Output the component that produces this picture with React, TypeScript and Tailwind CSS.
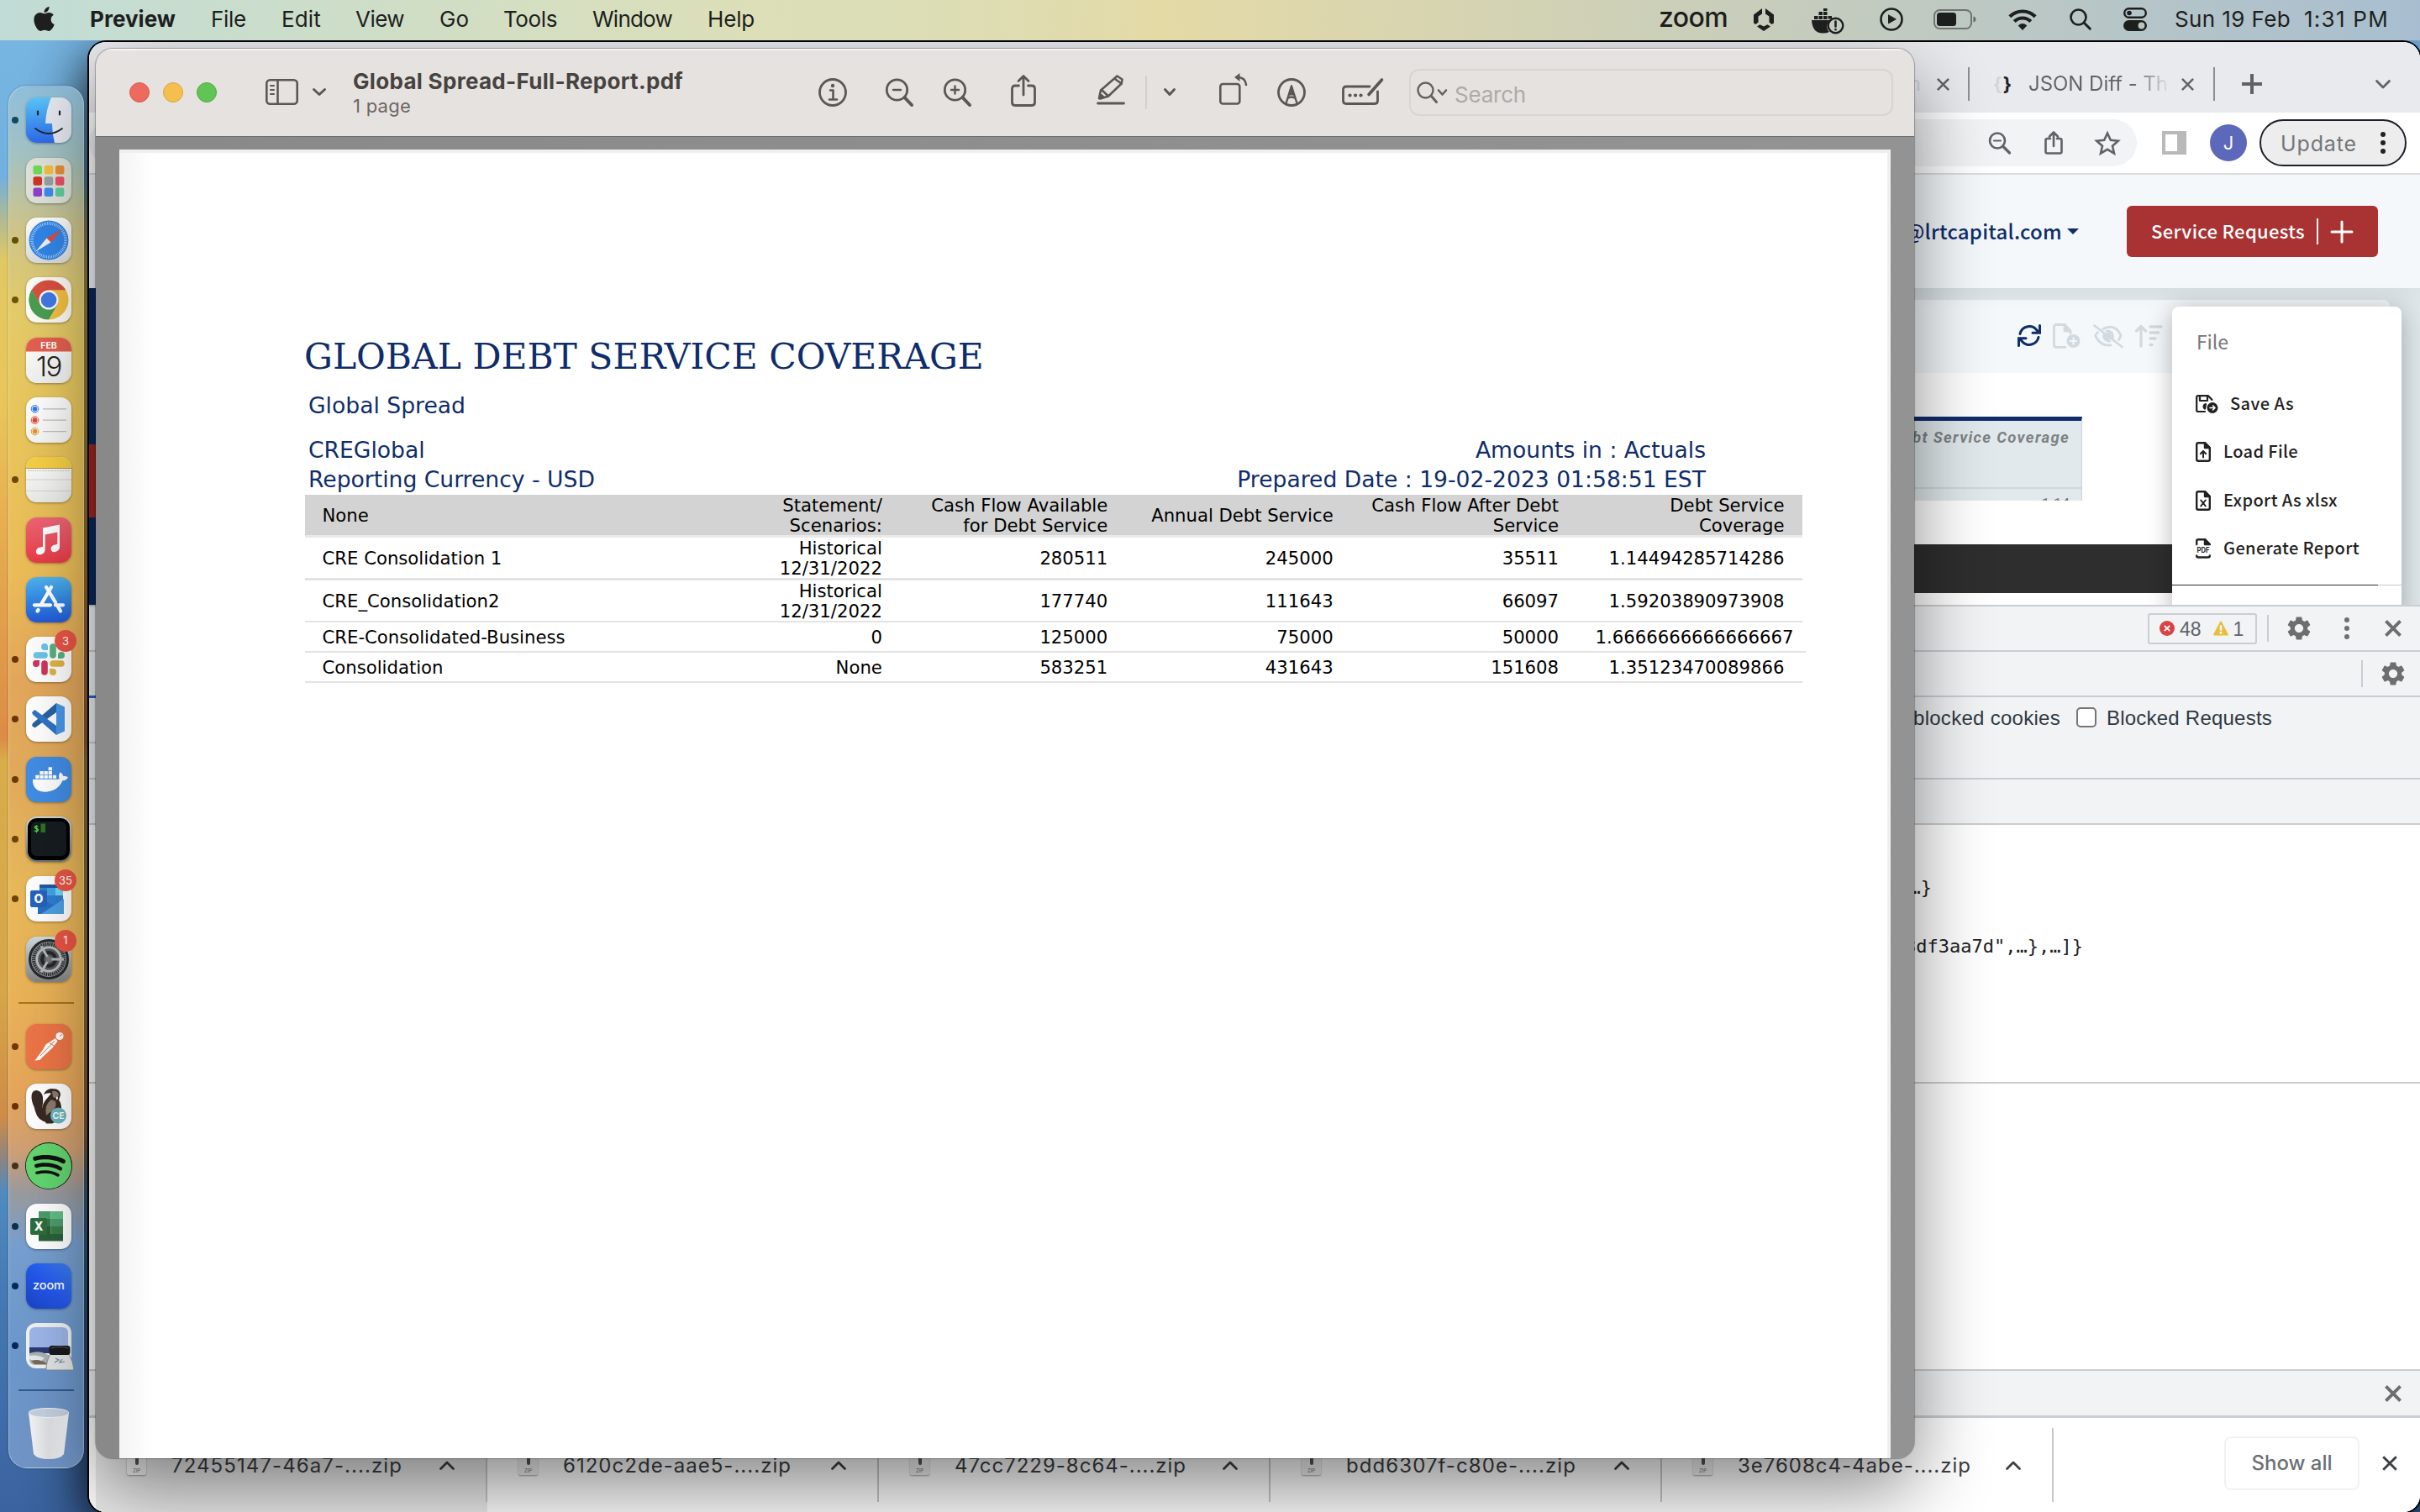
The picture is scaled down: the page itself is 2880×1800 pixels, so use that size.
import React, { useLayoutEffect, useRef, useState } from "react";
import { FaApple, FaDocker, FaSpotify } from "react-icons/fa";
import { MdSettings } from "react-icons/md";

/* Text whose tracking is adjusted at runtime so that it spans a given width. */
function Fit({ w, className = "", children }: { w: number; className?: string; children: string }) {
  const ref = useRef<HTMLSpanElement>(null);
  const [ls, setLs] = useState(0);
  useLayoutEffect(() => {
    if (ref.current) setLs((w - ref.current.getBoundingClientRect().width) / children.length);
  }, [w, children]);
  return (
    <span ref={ref} className={`inline-block shrink-0 whitespace-pre ${className}`} style={{ letterSpacing: `${ls}px` }}>
      {children}
    </span>
  );
}

type IconProps = { className?: string; box: string; sw?: number; children: React.ReactNode };
function Icon({ className = "", box, sw = 3, children }: IconProps) {
  return (
    <svg viewBox={box} className={`shrink-0 overflow-visible ${className}`} fill="none" stroke="currentColor" strokeWidth={sw} strokeLinecap="round" strokeLinejoin="round">
      {children}
    </svg>
  );
}

const Close = ({ className = "", sw = 3 }: { className?: string; sw?: number }) => (
  <Icon box="0 0 18 18" sw={sw} className={className}>
    <path d="M2 2l14 14M16 2L2 16" strokeLinecap="butt" />
  </Icon>
);

/* ---------------- Menu bar ---------------- */

const MENUS: [string, string, number][] = [
  ["File", "ml-[42px]", 42],
  ["Edit", "ml-[42px]", 47],
  ["View", "ml-[41px]", 58],
  ["Go", "ml-[42px]", 35],
  ["Tools", "ml-[41px]", 64],
  ["Window", "ml-[42px]", 95],
  ["Help", "ml-[42px]", 56],
];

function MenuBar() {
  return (
    <div className="absolute inset-x-0 top-0 z-40 flex h-12 items-center bg-linear-to-r from-[#c1dcd6] via-[#e4daa6] via-48% to-[#a8bed0] pb-[2px] text-[26px] leading-none text-[#1d1f1e]">
      <div className="absolute inset-0 bg-linear-to-r from-[#c1dcd6] via-[#dcdfb8] via-31% to-transparent to-48%" />
      <div className="relative flex w-full items-center">
        <FaApple className="ml-[37px] h-[33px] w-[31px] -translate-y-[1px]" />
        <Fit w={102} className="ml-[39px] font-bold">Preview</Fit>
        {MENUS.map(([t, m, w]) => (
          <div key={t} className={m}>
            <Fit w={w}>{t}</Fit>
          </div>
        ))}
        <div className="grow" />
        <Fit w={82} className="-translate-y-[2px] text-[32px] font-medium">zoom</Fit>
        <Icon box="0 0 24 27" sw={0} className="ml-[31px] h-[27px] w-6">
          <g fill="currentColor">
            <path d="M10 0v6.500L5.500 9.500v7L2.500 19 0 17.500V7.500z" />
            <path d="M14 0v6.500l4.500 3v7l3 2.500 2.500-1.500v-10z" />
            <path d="M4 21.500l3.500-2.300L12 21.500l4.500-2.300 3.500 2.300L12 27z" />
          </g>
        </Icon>
        <Icon box="0 0 39 31" sw={0} className="ml-[45px] h-[31px] w-[39px] translate-y-[2px]">
          <g fill="currentColor">
            <path d="M0 14h22a9.500 9.500 0 0 0-1 14q-3 1.500-8 1.500Q1 29.500 0 14zM3 9h4.500v4H3zM8.500 9H13v4H8.500zM14 9h4.500v4H14zM8.500 4H13v4H8.500zM14 4h4.500v4H14zM19.500 9H24v3.500h-4.500zM14 0h4.500v3H14z" />
          </g>
          <circle cx="28.500" cy="20.500" r="8.800" stroke="currentColor" strokeWidth="2.400" />
          <path d="M28.500 15.500v6M28.500 25v.3" stroke="currentColor" strokeWidth="2.600" />
        </Icon>
        <Icon box="0 0 28 28" sw={2.6} className="ml-[42px] h-[28px] w-[28px]">
          <circle cx="14" cy="14" r="12.500" />
          <path d="M10.500 9.200v9.600l8.500-4.800z" fill="currentColor" strokeWidth="1" />
        </Icon>
        <Icon box="0 0 51 24" sw={2} className="ml-[36px] h-6 w-[51px]">
          <rect x="1" y="1" width="44" height="22" rx="6.500" opacity=".5" />
          <rect x="4" y="4" width="23" height="16" rx="3.500" fill="currentColor" stroke="none" />
          <path d="M47.500 8.500q3 1 3 3.500t-3 3.500z" fill="currentColor" stroke="none" opacity=".55" />
        </Icon>
        <Icon box="0 0 34 25" sw={4.2} className="ml-[38px] h-[25px] w-[34px]">
          <path d="M1.800 8.800a21.500 21.500 0 0 1 30.400 0M7.200 14.600a13.800 13.800 0 0 1 19.600 0" strokeLinecap="butt" />
          <path d="M17 25l-5.300-5.600q5.300-4.600 10.600 0z" fill="currentColor" stroke="none" />
        </Icon>
        <Icon box="0 0 26 26" sw={2.6} className="ml-[39px] h-[26px] w-[26px]">
          <circle cx="10.500" cy="10.500" r="9" />
          <path d="M17.300 17.300l7 7" strokeWidth="3" />
        </Icon>
        <Icon box="0 0 28 28" sw={2.4} className="ml-[38px] h-7 w-7">
          <rect x="1.200" y="1.200" width="25.600" height="10.600" rx="5.300" />
          <circle cx="7" cy="6.500" r="2.800" fill="currentColor" stroke="none" />
          <rect x="0" y="15" width="28" height="13" rx="6.500" fill="currentColor" stroke="none" />
          <circle cx="21.500" cy="21.500" r="3.900" fill="#b9c3c0" stroke="none" />
        </Icon>
        <Fit w={138} className="ml-[33px]">Sun 19 Feb</Fit>
        <Fit w={101} className="mr-[37px] ml-[16px]">1:31 PM</Fit>
      </div>
    </div>
  );
}

/* ---------------- Dock ---------------- */

function Tile({ className = "", children }: { className?: string; children?: React.ReactNode }) {
  return (
    <svg viewBox="0 0 54 54" className={`h-[54px] w-[54px] overflow-hidden rounded-[13px] shadow-[0_1px_3px_rgba(0,0,0,0.35)] ${className}`}>
      {children}
    </svg>
  );
}

const LP = ["#6fdc5a", "#f4c13e", "#e98f35", "#cf3427", "#9aa1a6", "#ec5064", "#9440c8", "#3b8df2", "#5fcf9b"];

const finder = (
  <Tile className="bg-linear-to-b from-[#5cc6f8] to-[#3069ea]">
    <path d="M30 0Q24 14 23 31h8q0 12 3 23h20V0z" fill="#e6e9f0" />
    <path d="M14 16.500v4M40 16.500v4" stroke="#1b2530" strokeWidth="2.200" strokeLinecap="round" />
    <path d="M11 37q16 12 32 0" fill="none" stroke="#1b2530" strokeWidth="1.800" strokeLinecap="round" />
  </Tile>
);
const launchpad = (
  <Tile className="bg-[#dfe3da]">
    {LP.map((c, i) => (
      <rect key={c} x={8.500 + (i % 3) * 13.200} y={9 + Math.floor(i / 3) * 13.200} width="10.500" height="10.500" rx="2.500" fill={c} />
    ))}
  </Tile>
);
const safari = (
  <Tile className="bg-linear-to-b from-white to-[#dcdcdc]">
    <circle cx="27" cy="27" r="23.500" fill="#3186e8" />
    <circle cx="27" cy="27" r="20" fill="none" stroke="#cfe4fb" strokeWidth="3.500" strokeDasharray=".7 1.390" />
    <path d="M43 14L29.500 29.500l-5-5z" fill="#e8483c" />
    <path d="M11.500 40.500l13-16 5 5z" fill="#f2f2f2" />
  </Tile>
);
const chrome = (
  <Tile className="bg-[#fdfcf8]">
    <path d="M27 27L6.650 15.250A23.500 23.500 0 0 1 47.350 15.250z" fill="#d9503f" />
    <path d="M27 15.250h20.350A23.500 23.500 0 0 1 27 50.500L37.200 32.900z" fill="#f4c043" />
    <path d="M6.650 15.250A23.500 23.500 0 0 0 27 50.500L37.200 32.900 27 27 16.800 32.900z" fill="#4a9f50" />
    <path d="M27 15.250H6.650L16.800 32.900z" fill="#d9503f" />
    <path d="M6.650 15.250L16.800 32.900 27 38.800l-3 11.500A23.500 23.500 0 0 1 6.650 15.250z" fill="#4a9f50" />
    <circle cx="27" cy="27" r="11.500" fill="#fff" />
    <circle cx="27" cy="27" r="9.300" fill="#417be6" />
  </Tile>
);
const calendar = (
  <Tile className="bg-linear-to-b from-white to-[#f1f1ef]">
    <path d="M0 0h54v16.500H0z" fill="#e5604f" />
    <text x="27" y="12.600" textAnchor="middle" fontSize="10.500" fontWeight="700" fill="#fff" fontFamily="Inter">FEB</text>
    <text x="27" y="46" textAnchor="middle" fontSize="33" fontWeight="300" fill="#222" fontFamily="Inter" letterSpacing="-1.500">19</text>
  </Tile>
);
const reminders = (
  <Tile className="bg-linear-to-b from-white to-[#f6f6f4]">
    {["#2f79ef", "#e0483b", "#e5952f"].map((c, i) => (
      <g key={c}>
        <circle cx="10.500" cy={13.800 + i * 13.400} r="4.300" fill="none" stroke={c} strokeWidth="1" />
        <circle cx="10.500" cy={13.800 + i * 13.400} r="2.900" fill={c} />
        <path d={`M20 ${13.800 + i * 13.400}h28`} stroke="#bdbdbd" strokeWidth="1.200" />
      </g>
    ))}
  </Tile>
);
const notes = (
  <Tile className="bg-linear-to-b from-white to-[#ebebe7]">
    <path d="M0 0h54v13H0z" fill="#f7cf45" />
    <path d="M0 13.500h54" stroke="#a89552" strokeWidth="1" />
    <path d="M2 16.500h50" stroke="#aaa" strokeWidth="1" strokeDasharray="1 1.200" />
    <path d="M0 27h54M0 40.500h54" stroke="#d4d4d1" strokeWidth="1" />
  </Tile>
);
const music = (
  <Tile className="bg-linear-to-b from-[#ee6576] to-[#e93a48]">
    <path d="M20 12.500l20-4v26.500q0 4.500-5 6-5 .8-5.500-3.500.3-4.200 5-5l2.800-.8V17.500L22.700 20.500V38q0 4.800-5.200 6.200-5.200.8-5.700-3.500.3-4.400 5.200-5.200l3-.8z" fill="#fff" />
  </Tile>
);
const appstore = (
  <Tile className="bg-linear-to-b from-[#4fb4ee] to-[#2359d8]">
    <g stroke="#fff" strokeWidth="4.300" strokeLinecap="round">
      <path d="M30 12L18.500 31.500M14.500 39l-1 1.500M24 12l11 18M37 33.500l4 7M10 33.300h19M35 33.300h9" />
    </g>
  </Tile>
);
const slack = (
  <Tile className="bg-white">
    <g strokeLinecap="round" strokeWidth="7.600">
      <path d="M12.500 22H22" stroke="#6ac4ea" />
      <path d="M32 12v10" stroke="#58b181" />
      <path d="M22 32v10" stroke="#cf3560" />
      <path d="M32 32h10" stroke="#e2b347" />
    </g>
    <path d="M26 16V12a4 4 0 1 0-4 4z" fill="#6ac4ea" />
    <path d="M38 26h4a4 4 0 1 0-4-4z" fill="#58b181" />
    <path d="M28 38v4a4 4 0 1 0 4-4z" fill="#e2b347" />
    <path d="M16 28h-4a4 4 0 1 0 4 4z" fill="#cf3560" />
  </Tile>
);
const vscode = (
  <Tile className="bg-white">
    <path d="M36 8L8 32l-1 3 3.500 2.500L36 19z" fill="#2763a5" />
    <path d="M36 46L8 21.500 7 19l3.500-3L36 35z" fill="#3075c4" />
    <path d="M36 8l10 4.500v29L36 46z" fill="#4997ea" />
  </Tile>
);
const docker = (
  <div className="flex h-[54px] w-[54px] items-center justify-center rounded-[13px] bg-[#428de6] pl-[4px] shadow-[0_1px_3px_rgba(0,0,0,0.35)]">
    <FaDocker className="h-[42px] w-[42px] text-white" />
  </div>
);
const terminal = (
  <Tile className="bg-linear-to-b from-[#cfd8dd] to-[#6f7274]">
    <rect x="2" y="2" width="50" height="50" rx="11" fill="#000" />
    <rect x="6" y="6" width="42" height="41" rx="6" fill="#161c20" />
    <text x="9" y="18" fontSize="11" fontWeight="700" fill="#57dc47" fontFamily="DejaVu Sans Mono">$</text>
    <path d="M17.500 8.500h5.500v10.500h-5.500z" fill="#2e7326" />
  </Tile>
);
const outlook = (
  <Tile className="bg-white">
    <path d="M16 10h28v8H16z" fill="#2059a5" />
    <path d="M16 14h28v14H16z" fill="#2f82d3" />
    <path d="M25 14h10v9H25z" fill="#42a5e8" />
    <path d="M35 14h9v9h-9z" fill="#6ed5f6" />
    <path d="M14 23h30v22H14z" fill="#2f7fd2" />
    <path d="M14 25l31 16v4H14z" fill="#2a6fc6" />
    <path d="M45 27v18H18z" fill="#4da0e4" />
    <rect x="5" y="17" width="20" height="20" rx="2" fill="#2463bf" />
    <text x="15" y="32" textAnchor="middle" fontSize="14" fontWeight="800" fill="#fff" fontFamily="Inter">O</text>
  </Tile>
);
const settings = (
  <Tile className="bg-linear-to-b from-[#cfdbe0] to-[#848484]">
    <circle cx="27" cy="27" r="22.500" fill="#8d9294" stroke="#26282a" strokeWidth="3" />
    <circle cx="27" cy="27" r="18" fill="none" stroke="#2b2d2f" strokeWidth="4" strokeDasharray="1.500 1" />
    <circle cx="27" cy="27" r="14" fill="#55585a" stroke="#b9bdbf" strokeWidth="2.500" />
    <circle cx="27" cy="27" r="8" fill="none" stroke="#25272a" strokeWidth="4" />
    <path d="M27 27h18M27 27l-9-15.600M27 27l-9 15.600" stroke="#b3b7b9" strokeWidth="3" />
    <circle cx="27" cy="27" r="3.500" fill="#77797b" />
  </Tile>
);
const postman = (
  <Tile className="bg-[#ee7547]">
    <circle cx="40" cy="14.500" r="4.600" fill="#fff" />
    <path d="M35 17l-11 7-5 8-8.500 11.500 6-.5 3-3.500L31 29l6.500-8.500z" fill="#fff" />
    <path d="M34 20L17 38M28 22.500l6 4M40 14.500l3-2" stroke="#ee7547" strokeWidth="1" />
  </Tile>
);
const dbeaver = (
  <Tile className="bg-white">
    <path d="M6.500 17q-.5-9 6-9 6 .5 7.500 8 .5 8-1 13 .5 9 7 17-12-1-15-13-1-5-3-9-1-3-1.500-7z" fill="#382923" />
    <path d="M21 13q2-6 9-7l6 .5q5 2 5 7l-2 6q3 4 3 10l-2 14-9 4h-7q-6-8-5-18 1-7 7-13l4-5q-5-1-9 1.500z" fill="#382923" />
    <path d="M24 38q-3-12 6-19l5 2q2 6-3 11-5 3-8 6z" fill="#8d7a6e" />
    <path d="M31 9q6-1 8 4l-2 5-5-2z" fill="#8d7a6e" />
    <path d="M36 15.500l2 .5-.5 3h-1.500z" fill="#fff" />
    <circle cx="38.500" cy="38" r="9.500" fill="#6bb6bd" />
    <text x="38.500" y="42" textAnchor="middle" fontSize="10.500" fontWeight="600" fill="#fff" fontFamily="Inter">CE</text>
  </Tile>
);
const spotify = (
  <div className="flex h-14 w-14 shrink-0 items-center justify-center rounded-full bg-[#111]">
    <FaSpotify className="h-14 w-14 text-[#63d670]" />
  </div>
);
const excel = (
  <Tile className="bg-white">
    <path d="M15 9h14.500v9H15z" fill="#4a9e6c" />
    <path d="M29.500 9H44v9H29.500z" fill="#62be84" />
    <path d="M15 18h14.500v9H15z" fill="#347a49" />
    <path d="M29.500 18H44v9H29.500z" fill="#4a9e6c" />
    <path d="M15 27h14.500v9H15z" fill="#2a5f39" />
    <path d="M29.500 27H44v9H29.500z" fill="#397e4a" />
    <path d="M15 36h29v8.500H15z" fill="#2b613b" />
    <rect x="5" y="17" width="20" height="20" rx="2" fill="#2c6e3d" />
    <text x="15" y="32" textAnchor="middle" fontSize="14" fontWeight="800" fill="#fff" fontFamily="Inter">X</text>
  </Tile>
);
const zoomApp = (
  <Tile className="bg-linear-to-tr from-[#1a42c0] via-[#2459ee] to-[#3f7cf0]">
    <text x="8" y="31" fontSize="14.500" fontWeight="500" fill="#fff" fontFamily="Inter" textLength="38">zoom</text>
  </Tile>
);
const previewApp = (
  <svg viewBox="0 0 54 54" className="h-[54px] w-[54px] overflow-visible">
    <rect width="54" height="54" rx="12" fill="#f1f1f1" />
    <path d="M4 12q0-7 7-7h32q7 0 7 7v17H4z" fill="#9db6ea" />
    <path d="M4 29h46v7H4z" fill="#2b3a72" />
    <path d="M4 36q12-4 20 1t26-1v12q-2 2-6 2H11q-7 0-7-7z" fill="#a9b2b5" />
    <path d="M4 39q10-2 18 3l-4 3q-8 2-14-2z" fill="#e4e9ec" />
    <path d="M6 45q10-3 20 4H10z" fill="#7a6a58" />
    <path d="M29 37h22q5 8 6 19H24q0-11 5-19z" fill="#e2e5e6" stroke="#8b8e90" strokeWidth="1" />
    <path d="M35 42l4 2-5 3M43 43l-3 4 6-1" stroke="#70859a" strokeWidth="1.200" fill="none" />
    <rect x="27.500" y="27" width="25" height="11" rx="3" fill="#17191b" />
    <path d="M30 30q10-3 20 0" stroke="#5a5c5e" strokeWidth="1.200" fill="none" />
  </svg>
);

const Badge = ({ children }: { children: string }) => (
  <span className="absolute -top-[8px] -right-[6px] flex h-[26px] w-[26px] items-center justify-center rounded-full bg-[#ec5545] text-[13px] leading-none text-white">{children}</span>
);

type DockItem = { id: string; icon: React.ReactNode; dot?: string; badge?: string };
const DOCK_A: DockItem[] = [
  { id: "finder", icon: finder, dot: "bg-[#124a63]" },
  { id: "launchpad", icon: launchpad },
  { id: "safari", icon: safari, dot: "bg-[#655200]" },
  { id: "chrome", icon: chrome, dot: "bg-[#6f5500]" },
  { id: "calendar", icon: calendar },
  { id: "reminders", icon: reminders },
  { id: "notes", icon: notes, dot: "bg-[#724800]" },
  { id: "music", icon: music },
  { id: "appstore", icon: appstore },
  { id: "slack", icon: slack, dot: "bg-[#6b3600]", badge: "3" },
  { id: "vscode", icon: vscode, dot: "bg-[#6b3600]" },
  { id: "docker", icon: docker, dot: "bg-[#6b3d00]" },
  { id: "terminal", icon: terminal, dot: "bg-[#704400]" },
  { id: "outlook", icon: outlook, dot: "bg-[#704400]", badge: "35" },
  { id: "settings", icon: settings, badge: "1" },
];
const DOCK_B: DockItem[] = [
  { id: "postman", icon: postman, dot: "bg-[#6f3b00]" },
  { id: "dbeaver", icon: dbeaver, dot: "bg-[#6b3000]" },
  { id: "spotify", icon: spotify, dot: "bg-[#47301e]" },
  { id: "excel", icon: excel, dot: "bg-[#10304f]" },
  { id: "zoom", icon: zoomApp, dot: "bg-[#052a5e]" },
  { id: "preview", icon: previewApp, dot: "bg-[#05265a]" },
];

function DockList({ items }: { items: DockItem[] }) {
  return (
    <>
      {items.map((d) => (
        <div key={d.id} className="flex h-[71.3px] shrink-0 items-center">
          <span className={`ml-[3px] h-2 w-2 rounded-full ${d.dot ?? ""}`} />
          <div className="relative ml-[9px] flex w-[54px] justify-center">
            {d.icon}
            {d.badge && <Badge>{d.badge}</Badge>}
          </div>
        </div>
      ))}
    </>
  );
}

function Dock() {
  return (
    <div className="absolute top-[102px] left-[10px] flex h-[1646px] w-[90px] flex-col rounded-[22px] border-[1.5px] border-white/30 bg-[linear-gradient(to_bottom,#90bfdb_0%,#a4c3c4_5%,#cdc58c_10%,#e4cb6a_16%,#e9c65c_24%,#ebbd58_35%,#e3a75c_43%,#e1ab5b_50%,#e8b85a_58%,#eab257_66%,#e5a55b_73%,#cfa073_77%,#9c9b9d_80%,#769fcf_84%,#6c97cb_92%,#7194c6_100%)] pt-[4.800px] shadow-[0_0_3px_rgba(0,0,0,0.25)]">
      <DockList items={DOCK_A} />
      <div className="mx-[11px] mt-[16px] h-[2px] shrink-0 bg-[#a87520]" />
      <div className="mt-[15px] flex flex-col">
        <DockList items={DOCK_B} />
      </div>
      <div className="mx-[11px] mt-[16px] h-[2px] shrink-0 bg-[#325a92]" />
      <svg viewBox="0 0 48 61" className="mt-[20px] ml-[23px] h-[61px] w-12">
        <defs>
          <linearGradient id="bin" x1="0" x2="1">
            <stop offset="0" stopColor="#f4f5f6" />
            <stop offset=".5" stopColor="#dfe1e4" />
            <stop offset="1" stopColor="#f4f5f6" />
          </linearGradient>
        </defs>
        <path d="M0 6l6 49q4 6 18 6t18-6l6-49z" fill="url(#bin)" />
        <ellipse cx="24" cy="6" rx="24" ry="5.500" fill="#c5d0e0" stroke="#f2f4f6" strokeWidth="1" />
      </svg>
    </div>
  );
}

/* ---------------- Browser window ---------------- */

const FileShape = ({ children }: { children: React.ReactNode }) => (
  <Icon box="0 0 18 24" sw={2.4} className="h-6 w-[18px]">
    {children}
  </Icon>
);
const fileBody = (
  <>
    <path d="M11 1.200H3.200q-2 0-2 2v17.600q0 2 2 2h11.600q2 0 2-2V7z" />
    <path d="M11 1.200V7h5.800z" fill="currentColor" />
  </>
);

const FILE_MENU: { t: string; w: number; gap: string; icon: React.ReactNode }[] = [
  {
    t: "Save As",
    w: 76,
    gap: "ml-[14px]",
    icon: (
      <Icon box="0 0 27 22" sw={2.2} className="h-[22px] w-[27px]">
        <path d="M11 20H3q-1.800 0-1.800-1.800V3Q1.200 1.200 3 1.200h12L19.500 6" />
        <path d="M5 1.500v5.500h9V1.500" />
        <path d="M12 11a3 3 0 0 0-1 5.500z" fill="currentColor" />
        <circle cx="20" cy="15.500" r="6.500" fill="currentColor" stroke="none" />
        <path d="M17 15.500h5.500M20.500 13l2.500 2.500-2.500 2.500" stroke="#fff" strokeWidth="1.600" />
      </Icon>
    ),
  },
  { t: "Load File", w: 89, gap: "ml-[15px]", icon: <FileShape>{fileBody}<path d="M9 18.500v-7M5.800 14.200L9 11l3.200 3.200" strokeWidth="2" /></FileShape> },
  { t: "Export As xlsx", w: 136, gap: "ml-[15px]", icon: <FileShape>{fileBody}<path d="M6.200 11.500l5.600 7M11.800 11.500l-5.600 7" strokeWidth="2" /></FileShape> },
  {
    t: "Generate Report",
    w: 162,
    gap: "ml-[15px]",
    icon: (
      <FileShape>
        <path d="M1.200 7V3.200q0-2 2-2H11L16.800 7M1.200 20.500q0 2 2 2h11.600q2 0 2-2" />
        <path d="M11 1.200V7h5.800z" fill="currentColor" />
        <text x="9" y="17" textAnchor="middle" fontSize="8.500" fontWeight="700" fill="currentColor" stroke="none" fontFamily="Inter" textLength="15" lengthAdjust="spacingAndGlyphs">PDF</text>
      </FileShape>
    ),
  },
];

const DOWNLOADS: [string, number][] = [
  ["72455147-46a7-....zip", 275],
  ["6120c2de-aae5-....zip", 272],
  ["47cc7229-8c64-....zip", 276],
  ["bdd6307f-c80e-....zip", 274],
  ["3e7608c4-4abe-....zip", 278],
];

function TabStrip() {
  return (
    <div className="flex h-[84px] shrink-0 items-center justify-end bg-[#e8eaed] pt-[16px] pr-[35px] text-[24px] leading-none text-[#5f6368]">
      <span className="text-[#cfd1d4]">on</span>
      <Close className="ml-[18px] h-[17px] w-[17px]" sw={2.6} />
      <span className="ml-[21px] h-10 w-[2px] bg-[#8b8e93]" />
      <div className="ml-[28px] flex w-[22px] justify-between text-[22px] leading-none font-bold">
        <span className="text-[#d3d5d8]">{"{"}</span>
        <span className="text-[#202124]">{"}"}</span>
      </div>
      <Fit w={166} className="ml-[20px] translate-y-[2px] bg-linear-to-r from-[#5f6368] from-75% to-[#e0e2e5] bg-clip-text pb-1 text-transparent">JSON Diff - Th</Fit>
      <Close className="ml-[15px] h-[17px] w-[17px]" sw={2.6} />
      <span className="ml-[22px] h-10 w-[2px] bg-[#8b8e93]" />
      <Icon box="0 0 24 24" sw={4} className="ml-[32px] h-6 w-6">
        <path d="M12 0v24M0 12h24" strokeLinecap="butt" />
      </Icon>
      <Icon box="0 0 18 11" sw={2.8} className="ml-[135px] h-[11px] w-[18px]">
        <path d="M1.500 1.500L9 9l7.500-7.500" />
      </Icon>
    </div>
  );
}

function AddressBar() {
  return (
    <div className="flex h-[74px] shrink-0 items-center border-b-2 border-[#dadcdd] bg-white pr-[16px] text-[#5f6368]">
      <div className="flex h-14 grow items-center justify-end rounded-full bg-[#f1f3f4] pr-[20px]">
        <Icon box="0 0 27 26" sw={2.6} className="h-[26px] w-[27px]">
          <circle cx="11" cy="10.500" r="9" />
          <path d="M17.500 17l8 8" strokeWidth="3.200" />
          <path d="M7 10.500h8" strokeWidth="2.200" />
        </Icon>
        <Icon box="0 0 22 28" sw={2.6} className="ml-[40px] h-7 w-[22px]">
          <path d="M7 9H3.500Q1.500 9 1.500 11v13.500q0 2 2 2h15q2 0 2-2V11q0-2-2-2H15M11 18V2M6 6.500l5-5 5 5" />
        </Icon>
        <Icon box="0 0 30 28" sw={2.6} className="ml-[38px] h-7 w-[30px]">
          <path d="M15 2.500l3.800 8.300 9 .9-6.800 6 2 8.800-8-4.700-8 4.700 2-8.800-6.800-6 9-.9z" strokeLinejoin="miter" />
        </Icon>
      </div>
      <div className="ml-[30px] h-7 w-[29px] border-4 border-r-[11px] border-[#b9b9b9] bg-white" />
      <div className="ml-[28px] flex h-11 w-11 items-center justify-center rounded-full bg-[#5c68ba] text-[22px] leading-none text-white">J</div>
      <div className="ml-[15px] flex h-14 w-[175px] items-center rounded-full border-2 border-[#1f1f29] bg-[#ededed] pl-[23px] text-[25px] leading-none text-[#72767b]">
        <Fit w={91} className="translate-y-px">Update</Fit>
        <div className="ml-[28px] flex flex-col gap-[4px]">
          <span className="h-[6px] w-[6px] rounded-full bg-[#202124]" />
          <span className="h-[6px] w-[6px] rounded-full bg-[#202124]" />
          <span className="h-[6px] w-[6px] rounded-full bg-[#202124]" />
        </div>
      </div>
    </div>
  );
}

function WebApp() {
  return (
    <div className="relative flex h-[512px] shrink-0 flex-col overflow-hidden bg-[#dfe7eb] font-['Noto_Sans_CJK_SC','Noto_Sans',sans-serif]">
      <div className="z-10 flex h-[135px] shrink-0 items-center justify-end bg-[#f4f8fb] pr-[50px] shadow-[0_2px_30px_rgba(0,0,0,0.06)]">
        <Fit w={187} className="-translate-y-px text-[24px] leading-none font-medium text-[#0f2d6b]">@lrtcapital.com</Fit>
        <Icon box="0 0 14 7" sw={0} className="ml-[6px] h-[7px] w-[14px]">
          <path d="M0 0h14L7 7z" fill="#0f2d6b" />
        </Icon>
        <div className="ml-[57px] flex h-[61px] w-[299px] items-center rounded-[6px] bg-[#a93232] pl-[29px] text-white">
          <Fit w={183} className="-translate-y-[2px] text-[22px] leading-none font-medium">Service Requests</Fit>
          <span className="ml-[14px] h-[31px] w-[2px] bg-white" />
          <Icon box="0 0 26 26" sw={3} className="ml-[15px] h-[26px] w-[26px]">
            <path d="M13 1v24M1 13h24" />
          </Icon>
        </div>
      </div>
      <div className="flex grow">
        <div className="flex w-[300px] flex-col bg-[#0a2861]">
          <div className="mt-[186px] h-[87px] bg-[#a3261f]" />
        </div>
        <div className="mt-[14px] mr-[36px] flex grow flex-col overflow-hidden rounded-tr-lg bg-white">
          <div className="flex h-[87px] shrink-0 items-center justify-end bg-[#f4f8fb] pr-[271px] pb-[2px] text-[#d3dadf]">
            <Icon box="0 0 28 27" sw={3} className="h-[27px] w-7 text-[#0f2d6b]">
              <path d="M3 11.500A11.300 11.300 0 0 1 22.500 6.500l3 3.500M26.500 1.500V10.300H18M25 15.500A11.300 11.300 0 0 1 5.500 20.500l-3-3.500M1.500 25.500V16.700H10" strokeLinejoin="miter" />
            </Icon>
            <Icon box="0 0 33 30" sw={2.8} className="ml-[14px] h-[30px] w-[33px]">
              <path d="M15 28.300H4q-2.500 0-2.500-2.500V4Q1.500 1.500 4 1.500h10L21 9v3" />
              <path d="M14 1.500V9h7z" fill="currentColor" />
              <circle cx="24.500" cy="21" r="8" fill="currentColor" stroke="none" />
              <path d="M24.500 17.500v7M21 21h7" stroke="#f4f8fb" strokeWidth="2" />
            </Icon>
            <Icon box="0 0 36 28" sw={2.8} className="ml-[15px] h-7 w-9">
              <path d="M1.500 1.500l33 25.500M12 5.500Q24-.5 31 9.500l2 4-2.500 5M5.500 9.500l-3 4Q9 26.500 21 25" />
              <path d="M16 8q8 0 7.500 8M12.500 13q0 6 7 7" />
              <circle cx="18" cy="14" r="2.500" />
            </Icon>
            <Icon box="0 0 32 28" sw={3.4} className="ml-[14px] h-7 w-8">
              <path d="M7 26V3M1.500 8L7 2.500 12.500 8M18 3h13M18 10h9.500M18 17h6M18 24.500h2" />
            </Icon>
          </div>
          <div className="flex h-[204px] shrink-0 flex-col pt-[52px]">
            <div className="mr-[366px] flex h-[100px] flex-col overflow-hidden border-t-[5px] border-r border-t-[#0f2d6b] border-r-[#cbd3d6] bg-[#e1e9ec] pr-[14px] text-right font-['Roboto']">
              <div className="flex h-[79px] shrink-0 justify-end pt-[11px] text-[18.500px] leading-none font-bold text-[#7d8184] italic">
                <Fit w={211}>Debt Service Coverage</Fit>
              </div>
              <div className="-mr-[14px] h-[2px] shrink-0 bg-[#cfd7da]" />
              <div className="shrink-0 pt-[9px] text-[17px] leading-none text-[#777]">1.14</div>
            </div>
          </div>
          <div className="h-[58px] shrink-0 bg-[#2e2e2e]" />
        </div>
      </div>
      <div className="absolute top-[157px] right-[22px] z-20 flex h-[380px] w-[273px] flex-col rounded-lg bg-white text-[#212121] shadow-[0_4px_30px_rgba(0,0,0,0.28)]">
        <div className="flex h-[86px] shrink-0 items-center pl-[29px] text-[23px] leading-none text-[#777]">
          <Fit w={38} className="-translate-y-[2px]">File</Fit>
        </div>
        {FILE_MENU.map((m) => (
          <div key={m.t} className="flex h-[57.500px] shrink-0 translate-y-px items-center pl-[28px] text-[20px] leading-none font-medium">
            {m.icon}
            <Fit w={m.w} className={`-translate-y-[1px] ${m.gap}`}>{m.t}</Fit>
          </div>
        ))}
        <div className="mt-[15px] flex h-px shrink-0 bg-[#2a2a2a] pl-[245px]">
          <div className="grow bg-[#c3c9cd]" />
        </div>
      </div>
    </div>
  );
}

function DevTools() {
  return (
    <div className="flex h-[968px] shrink-0 flex-col bg-white font-['Liberation_Sans',Arial,sans-serif] text-[24px] text-[#6e6e6e]">
      <div className="flex h-[54px] shrink-0 items-center justify-end border-t-2 border-[#cacdd1] bg-[#f1f3f5] pr-[21px]">
        <div className="flex h-[37px] w-[130px] items-center rounded-[3px] border-2 border-[#cacdd1] pl-[12px] text-[23px] leading-none text-[#5f6368]">
          <svg viewBox="0 0 18 18" className="h-[18px] w-[18px]">
            <circle cx="9" cy="9" r="9" fill="#da4246" />
            <path d="M5.800 5.800l6.400 6.400M12.200 5.800l-6.400 6.400" stroke="#fff" strokeWidth="1.900" />
          </svg>
          <span className="ml-[6px] translate-y-px">48</span>
          <svg viewBox="0 0 18 18" className="ml-[14px] h-[18px] w-[18px]">
            <path d="M9 1.500l7.800 15H1.200z" fill="#eabd3b" stroke="#eabd3b" strokeWidth="2" strokeLinejoin="round" />
            <path d="M9 5.500v6M9 13v2.500" stroke="#fff" strokeWidth="2.600" />
          </svg>
          <span className="ml-[6px] translate-y-px">1</span>
        </div>
        <span className="ml-[12px] h-8 w-[2px] bg-[#cacdd1]" />
        <MdSettings className="ml-[19px] h-[34px] w-[34px]" />
        <div className="ml-[37px] flex flex-col gap-[4px]">
          <span className="h-[6px] w-[6px] rounded-full bg-current" />
          <span className="h-[6px] w-[6px] rounded-full bg-current" />
          <span className="h-[6px] w-[6px] rounded-full bg-current" />
        </div>
        <Close className="ml-[41px] h-[22px] w-[22px]" sw={3.2} />
      </div>
      <div className="flex h-[54px] shrink-0 items-center border-t-2 border-[#cacdd1] bg-[#f1f3f5] pr-[15px]">
        <div className="relative z-10 h-full w-[60px] translate-y-[3px] border-b-[3px] border-[#2a62d8]" />
        <div className="grow" />
        <span className="h-8 w-[2px] bg-[#cacdd1]" />
        <MdSettings className="ml-[19px] h-[34px] w-[34px]" />
      </div>
      <div className="flex h-[98px] shrink-0 items-start border-t-2 border-[#cacdd1] bg-[#f1f3f5] pt-[11px] pr-[176px] text-[#303942]">
        <div className="mt-[42px] h-[2px] w-[60px] bg-[#cacdd1]" />
        <div className="grow" />
        <Fit w={175} className="mt-px leading-[26px]">blocked cookies</Fit>
        <span className="mt-px ml-[19px] h-6 w-6 rounded-[5px] border-2 border-[#767676] bg-white" />
        <Fit w={197} className="mt-px ml-[12px] leading-[26px]">Blocked Requests</Fit>
      </div>
      <div className="h-[54px] shrink-0 border-t-2 border-[#cacdd1] bg-[#f1f3f5]" />
      <div className="flex h-[308px] shrink-0 flex-col items-end border-t-2 border-[#cacdd1] pt-[63px] font-['DejaVu_Sans_Mono'] text-[22px] leading-[24px] text-[#202124]">
        <span className="mr-[581px]">…{"}"}</span>
        <span className="mt-[46px] mr-[401px]">{'3df3aa7d",…},…]}'}</span>
      </div>
      <div className="h-[342px] shrink-0 border-t-2 border-[#cacdd1]" />
      <div className="flex h-[58px] shrink-0 items-center justify-end border-t-2 border-b-[3px] border-[#cacdd1] bg-[#f1f3f5] pr-[21px]">
        <Close className="h-[22px] w-[22px]" sw={3.2} />
      </div>
    </div>
  );
}

function DownloadShelf() {
  return (
    <div className="flex h-[112px] shrink-0 items-center bg-white pl-[8px] text-[24px] leading-none text-[#3c4043]">
      {DOWNLOADS.map(([name, w], i) => (
        <div key={name} className={`flex h-full w-[466px] shrink-0 items-center pl-[37px] ${i === 0 ? "bg-[#ebebeb]" : ""}`}>
          <div className="flex h-[34px] w-[23px] -translate-y-[5px] flex-col items-center justify-between rounded-[2px] bg-[#f4f4f4] pb-[2px] shadow-[0_1px_2px_rgba(0,0,0,0.35)]">
            <span className="h-[22px] w-[4px] rounded-full bg-[#555]" />
            <span className="text-[6px] leading-none text-[#777]">ZIP</span>
          </div>
          <Fit w={w} className="ml-[30px] translate-y-[1px]">{name}</Fit>
          <div className="grow" />
          <Icon box="0 0 18 11" sw={2.800} className="mr-[37px] h-[11px] w-[18px]">
            <path d="M1.500 9.500L9 2l7.500 7.500" />
          </Icon>
          <span className="h-[88px] w-[2px] bg-[#c6c8ca]" />
        </div>
      ))}
      <div className="grow" />
      <div className="flex h-16 w-[161px] -translate-y-[2px] items-center justify-center rounded-lg border-2 border-[#f1f2f3] font-medium text-[#6b6f74]">
        <Fit w={96}>Show all</Fit>
      </div>
      <Close className="mr-[26px] ml-[26px] h-[20px] w-[20px] -translate-y-[2px]" sw={2.600} />
    </div>
  );
}

function Browser() {
  return (
    <div className="absolute top-[50px] right-0 bottom-0 left-[106px] rounded-[20px] shadow-[0_0_0_2px_#000,0_20px_60px_rgba(0,0,0,0.9)]">
      <div className="flex h-full flex-col overflow-hidden rounded-[20px] bg-white">
        <TabStrip />
        <AddressBar />
        <WebApp />
        <DevTools />
        <DownloadShelf />
      </div>
    </div>
  );
}

/* ---------------- Preview window ---------------- */

function PreviewToolbar() {
  return (
    <div className="flex h-[105px] shrink-0 items-center border-t-2 border-b border-t-[#f7f5f3] border-b-[#6f6f6f] bg-[#e6e2df] pr-[25px] pb-[3px] pl-[40px] leading-none text-[#5b5754]">
      <span className="h-6 w-6 rounded-full border border-[#d95a4c] bg-[#ec6a5e]" />
      <span className="ml-4 h-6 w-6 rounded-full border border-[#dba63f] bg-[#f4bf4f]" />
      <span className="ml-4 h-6 w-6 rounded-full border border-[#52a843] bg-[#61c555]" />
      <Icon box="0 0 39 31" sw={2.6} className="ml-[58px] h-[31px] w-[39px]">
        <rect x="1.300" y="1.300" width="36.400" height="28.400" rx="4" />
        <path d="M14.500 1.500v28" strokeLinecap="butt" />
        <path d="M6 8h4M6 13h4M6 18h4" strokeWidth="2" />
      </Icon>
      <Icon box="0 0 16 9" sw={3} className="ml-[17px] h-[9px] w-4">
        <path d="M1.500 1.500L8 7.500l6.500-6" />
      </Icon>
      <div className="mt-[2px] ml-[32px] flex w-[400px] flex-col">
        <Fit w={393} className="self-start text-[26px] leading-[30px] font-bold text-[#474341]">Global Spread-Full-Report.pdf</Fit>
        <Fit w={69} className="self-start text-[22px] leading-[28px] text-[#6c6865]">1 page</Fit>
      </div>
      <Icon box="0 0 34 34" sw={2.8} className="ml-[154px] h-[34px] w-[34px]">
        <circle cx="17" cy="17" r="15.500" />
        <path d="M14 14.500h3.500V25M13 25.500h9" strokeWidth="2.600" />
        <circle cx="17" cy="9" r="2.200" fill="currentColor" stroke="none" />
      </Icon>
      <Icon box="0 0 33 34" sw={2.8} className="ml-[46px] h-[34px] w-[33px]">
        <circle cx="13.500" cy="14" r="12.200" />
        <path d="M22.500 23l8.500 9" strokeWidth="4" />
        <path d="M9 14h9" strokeWidth="2.400" />
      </Icon>
      <Icon box="0 0 33 34" sw={2.8} className="ml-[36px] h-[34px] w-[33px]">
        <circle cx="13.500" cy="14" r="12.200" />
        <path d="M22.500 23l8.500 9" strokeWidth="4" />
        <path d="M9 14h9M13.500 9.500v9" strokeWidth="2.400" />
      </Icon>
      <Icon box="0 0 30 38" sw={2.8} className="ml-[47px] h-[38px] w-[30px] -translate-y-[2px]">
        <path d="M9.500 13H5q-3.500 0-3.500 3.500V33q0 3.500 3.500 3.500h20q3.500 0 3.500-3.500V16.500Q28.500 13 25 13h-4.500M15 24V2M9 7.500l6-6 6 6" />
      </Icon>
      <Icon box="0 0 34 36" sw={2.6} className="ml-[72px] h-9 w-[34px] -translate-y-[3px]">
        <path d="M1.500 34h31" strokeWidth="2.800" />
        <path d="M24.500 1.500l6 4-.8 5L14 25.500l-9.500 3-1.500-.5L5 18.500z" />
        <path d="M22 5l7.500 5.500M6 18l7 6.500" />
        <path d="M3 28.500l3-5.500 3.500 3.500z" fill="currentColor" strokeWidth="1" />
      </Icon>
      <span className="ml-[24px] h-10 w-[2px] bg-[#d3cfcc]" />
      <Icon box="0 0 14 9" sw={3} className="ml-[20px] h-[9px] w-[14px]">
        <path d="M1.500 1.500L7 7.500l5.500-6" />
      </Icon>
      <Icon box="0 0 33 38" sw={2.6} className="ml-[52px] h-[38px] w-[33px] -translate-y-[4px]">
        <rect x="1.300" y="13" width="23" height="23.500" rx="3" />
        <path d="M22 5q9 0 10 9" />
        <path d="M18 5l6.500-5v10z" fill="currentColor" stroke="none" />
      </Icon>
      <Icon box="0 0 34 34" sw={2.8} className="ml-[36px] h-[34px] w-[34px]">
        <circle cx="17" cy="17" r="15.500" />
        <path d="M10.500 30L17 9.500 23.500 30M12.500 24q4.500-3 9 0" strokeWidth="2.400" />
        <path d="M17 9l3.300 11h-6.600z" fill="currentColor" strokeWidth="1" />
      </Icon>
      <Icon box="0 0 50 32" sw={2.8} className="ml-[43px] h-8 w-[50px] -translate-y-[1px]">
        <path d="M33 10H5q-3.500 0-3.500 3.500V27q0 3.500 3.500 3.500h34q3.500 0 3.500-3.500V16" />
        <path d="M47.500 2L32 19.500" strokeWidth="3.600" />
        <path d="M9.500 20.500h.1M16 20.500h.1M22.500 20.500h.1" strokeWidth="4.200" />
      </Icon>
      <div className="ml-[30px] flex h-[56px] grow items-center rounded-[12px] border-2 border-[#d8d4d1] pl-[7px] text-[26px] text-[#aeaaa7]">
        <Icon box="0 0 25 26" sw={2.4} className="h-[26px] w-[25px] text-[#65615e]">
          <circle cx="10.500" cy="10.500" r="9" />
          <path d="M17.500 17.500l6 7" strokeWidth="3" />
        </Icon>
        <Icon box="0 0 11 8" sw={2.600} className="h-2 w-[11px] text-[#65615e]">
          <path d="M1 1.500l4.500 5 4.500-5" />
        </Icon>
        <Fit w={85} className="mt-[6px] ml-[9px]">Search</Fit>
      </div>
    </div>
  );
}

const HEAD = ["None", "Statement/\nScenarios:", "Cash Flow Available\nfor Debt Service", "Annual Debt Service", "Cash Flow After Debt\nService", "Debt Service\nCoverage"];
const ROWS = [
  ["CRE Consolidation 1", "Historical\n12/31/2022", "280511", "245000", "35511", "1.14494285714286"],
  ["CRE_Consolidation2", "Historical\n12/31/2022", "177740", "111643", "66097", "1.59203890973908"],
  ["CRE-Consolidated-Business", "0", "125000", "75000", "50000", "1.6666666666666667"],
  ["Consolidation", "None", "583251", "431643", "151608", "1.35123470089866"],
];
const ROW_STYLE = [
  "h-[51px] border-b-[3px] w-[1782px]",
  "h-[50px] border-b-2 w-[1782px]",
  "h-[36px] border-b-2 w-[1786px]",
  "h-[36px] border-b-2 w-[1782px]",
];

function Cells({ cells, wide = false }: { cells: string[]; wide?: boolean }) {
  return (
    <>
      {cells.map((c, i) => (
        <div key={i} className={`shrink-0 translate-y-px whitespace-pre ${i === 0 ? "w-[440px] pl-[20.5px]" : "w-[268.4px] pr-[21.5px] text-right"} ${wide && i === 5 ? "translate-x-[11px]" : ""}`}>
          {c}
        </div>
      ))}
    </>
  );
}

function Report() {
  return (
    <div className="grow border-t-[4px] border-r-[4px] border-[#efefef] bg-linear-to-r from-[#f4f4f4] to-white to-2% pt-[218px] pl-[221px] font-['DejaVu_Sans'] text-[21.200px] leading-[24.500px] text-black">
      <div className="w-[1667px] text-[26.600px] leading-[35px] text-[#0f2d6b]">
        <h1 className="-ml-px h-[50px] font-['DejaVu_Serif'] text-[42.450px] leading-[50px] whitespace-nowrap">GLOBAL DEBT SERVICE COVERAGE</h1>
        <div className="mt-[15px] mb-[17px] pl-[4px] leading-[36px]">Global Spread</div>
        <div className="flex justify-between pl-[4px]">
          <span>CREGlobal</span>
          <span>Amounts in : Actuals</span>
        </div>
        <div className="flex justify-between pl-[4px]">
          <span>Reporting Currency - USD</span>
          <span>Prepared Date : 19-02-2023 01:58:51 EST</span>
        </div>
      </div>
      <div className="mt-[1px] flex h-[51px] w-[1782px] items-center border-b-[3px] border-[#e9e9e9] bg-[#d3d3d3] leading-[24px]">
        <Cells cells={HEAD} />
      </div>
      {ROWS.map((r, i) => (
        <div key={i} className={`flex items-center border-[#e3e3e3] ${ROW_STYLE[i]}`}>
          <Cells cells={r} wide={i === 2} />
        </div>
      ))}
    </div>
  );
}

function Preview() {
  return (
    <div className="absolute top-[58px] left-[114px] z-30 flex h-[1678px] w-[2164px] flex-col overflow-hidden rounded-[20px] bg-[#919191] shadow-[0_0_1px_1px_rgba(0,0,0,0.28),0_36px_90px_rgba(0,0,0,0.47)]">
      <PreviewToolbar />
      <div className="flex grow bg-linear-to-r from-[#898989] to-[#939393] px-[28px] pt-[15px]">
        <Report />
      </div>
    </div>
  );
}

export default function App() {
  return (
    <div className="relative h-[1800px] w-[2880px] overflow-hidden bg-[linear-gradient(to_bottom,#78b6e2_0,#72b0e0_210px,#a9b99c_255px,#e2c862_310px,#e9c65a_480px,#e5ac50_640px,#dc8c45_880px,#d9ad4b_905px,#d6a649_1180px,#cf8c48_1330px,#8c8580_1380px,#4e8bc0_1420px,#4377b0_1560px,#3b639f_1800px)] font-['Inter',sans-serif]">
      <Browser />
      <Dock />
      <MenuBar />
      <Preview />
    </div>
  );
}
